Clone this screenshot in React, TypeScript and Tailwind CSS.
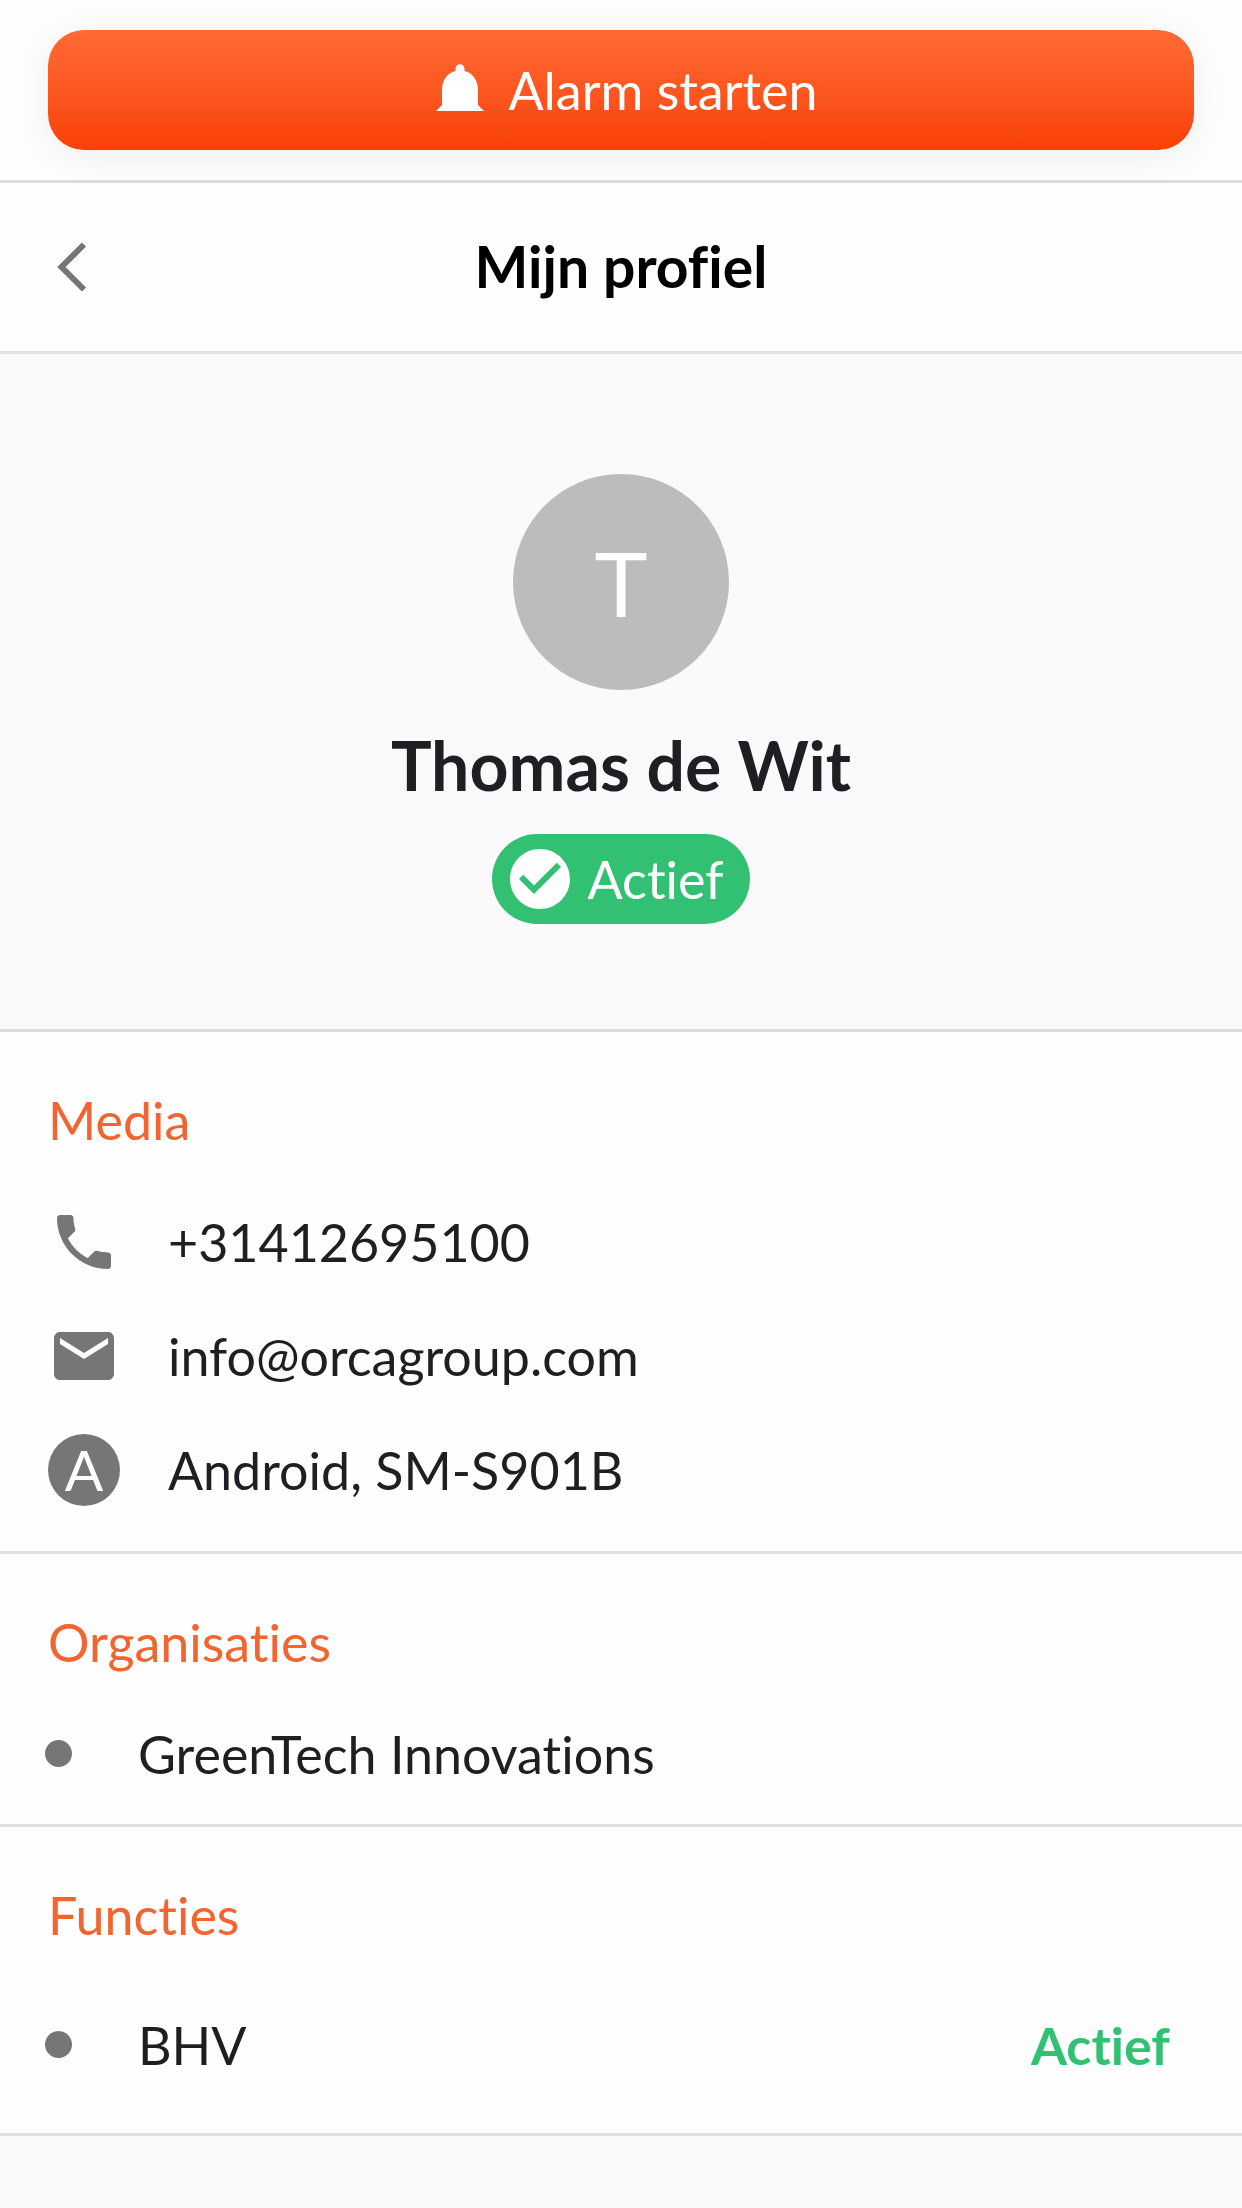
import type { ReactNode } from "react";

const BellIcon = () => (
  <svg className="w-[72px] h-[72px]" viewBox="0 0 24 24" fill="currentColor" aria-hidden="true">
    <path d="M18 17v-5c0-3.070-1.640-5.640-4.500-6.320v-.78c0-.83-.67-1.500-1.500-1.500s-1.500.67-1.500 1.500v.78C7.630 6.360 6 8.920 6 12v5l-2 2h16l-2-2z" />
  </svg>
);

const ChevronLeftIcon = () => (
  <svg className="w-[30px] h-[50px]" viewBox="0 0 30 50" fill="none" stroke="currentColor" strokeWidth={6} aria-hidden="true">
    <path d="M27 2.500L4.500 25 27 47.500" />
  </svg>
);

const CheckCircleIcon = () => (
  <svg className="w-[60px] h-[60px]" viewBox="2 2 20 20" fill="currentColor" aria-hidden="true">
    <path d="M12 2C6.480 2 2 6.480 2 12s4.480 10 10 10 10-4.480 10-10S17.520 2 12 2zm-2 15l-5-5 1.410-1.410L10 14.170l7.590-7.590L19 8l-9 9z" />
  </svg>
);

const PhoneIcon = () => (
  <svg className="w-[72px] h-[72px]" viewBox="0 0 24 24" fill="currentColor" aria-hidden="true">
    <path d="M6.620 10.790c1.440 2.830 3.760 5.140 6.590 6.590l2.200-2.200c.27-.27.67-.36 1.020-.24 1.120.37 2.330.57 3.570.57.55 0 1 .45 1 1V20c0 .55-.45 1-1 1-9.390 0-17-7.610-17-17 0-.55.45-1 1-1h3.500c.55 0 1 .45 1 1 0 1.250.2 2.450.57 3.570.11.35.03.74-.25 1.020l-2.200 2.200z" />
  </svg>
);

const MailIcon = () => (
  <svg className="w-[72px] h-[72px]" viewBox="0 0 24 24" fill="currentColor" aria-hidden="true">
    <path d="M20 4H4c-1.100 0-1.990.9-1.990 2L2 18c0 1.100.9 2 2 2h16c1.100 0 2-.9 2-2V6c0-1.100-.9-2-2-2zm0 4l-8 5-8-5V6l8 5 8-5v2z" />
  </svg>
);

function Section({ title, children }: { title: string; children: ReactNode }) {
  return (
    <section className="bg-[#fefefe] border-b-[3px] border-[#e1dfe3] px-12 pt-[54px] pb-6">
      <h3 className="mb-[30px] leading-[69px] text-[#f26430]">{title}</h3>
      {children}
    </section>
  );
}

export default function App() {
  return (
    <div className="min-h-screen bg-[#fbf9fc] font-['Lato',sans-serif] [font-variant-ligatures:none] text-[52px] text-[#201e22]">
      {/* Alarm Button */}
      <div className="bg-[#fefdfe] px-12 py-[30px] border-b-[3px] border-[#dedce0]">
        <button
          type="button"
          className="w-full h-[120px] flex items-center justify-center gap-3 rounded-[36px] bg-gradient-to-b from-[#ff6a33] to-[#f94000] text-white shadow-[0_6px_36px_rgba(0,0,0,0.06)]"
        >
          <BellIcon />
          <span>Alarm starten</span>
        </button>
      </div>

      {/* Header */}
      <header className="relative flex items-center justify-center h-[171px] bg-[#fefefe] border-b-[3px] border-[#e3e2e4]">
        <button type="button" aria-label="Terug" className="absolute left-[57px] text-[#777578]">
          <ChevronLeftIcon />
        </button>
        <h1 className="text-[57px] font-bold text-black">Mijn profiel</h1>
      </header>

      {/* Profile */}
      <div className="flex flex-col items-center pt-[120px] pb-[105px] border-b-[3px] border-[#dedce0]">
        <div className="w-[216px] h-[216px] flex items-center justify-center rounded-full bg-[#bdbbbe] text-[90px] text-white">
          T
        </div>
        <h2 className="mt-6 leading-[102px] text-[68px] font-bold">Thomas de Wit</h2>
        <div className="mt-[18px] h-[90px] flex items-center gap-[18px] rounded-full bg-[#32c173] pl-[18px] pr-[27px] text-white">
          <CheckCircleIcon />
          <span>Actief</span>
        </div>
      </div>

      {/* Media */}
      <Section title="Media">
        <ul>
          <li className="flex items-center gap-12 h-[114px]">
            <span className="text-[#777578]"><PhoneIcon /></span>
            <a href="tel:+31412695100">+31412695100</a>
          </li>
          <li className="flex items-center gap-12 h-[114px]">
            <span className="text-[#777578]"><MailIcon /></span>
            <a href="mailto:info@orcagroup.com">info@orcagroup.com</a>
          </li>
          <li className="flex items-center gap-12 h-[114px]">
            <span className="w-[72px] h-[72px] flex items-center justify-center rounded-full bg-[#777578] text-[57px] text-white">A</span>
            <span>Android, SM-S901B</span>
          </li>
        </ul>
      </Section>

      {/* Organisaties */}
      <Section title="Organisaties">
        <ul>
          <li className="flex items-center gap-[66px] h-[93px] -ml-[3px]">
            <span className="w-[27px] h-[27px] rounded-full bg-[#777578]"></span>
            <span>GreenTech Innovations</span>
          </li>
        </ul>
      </Section>

      {/* Functies */}
      <Section title="Functies">
        <ul>
          <li className="flex items-center gap-[66px] h-[129px] -ml-[3px] pr-6">
            <span className="w-[27px] h-[27px] rounded-full bg-[#777578]"></span>
            <span>BHV</span>
            <span className="ml-auto font-bold text-[#32c173]">Actief</span>
          </li>
        </ul>
      </Section>
    </div>
  );
}
